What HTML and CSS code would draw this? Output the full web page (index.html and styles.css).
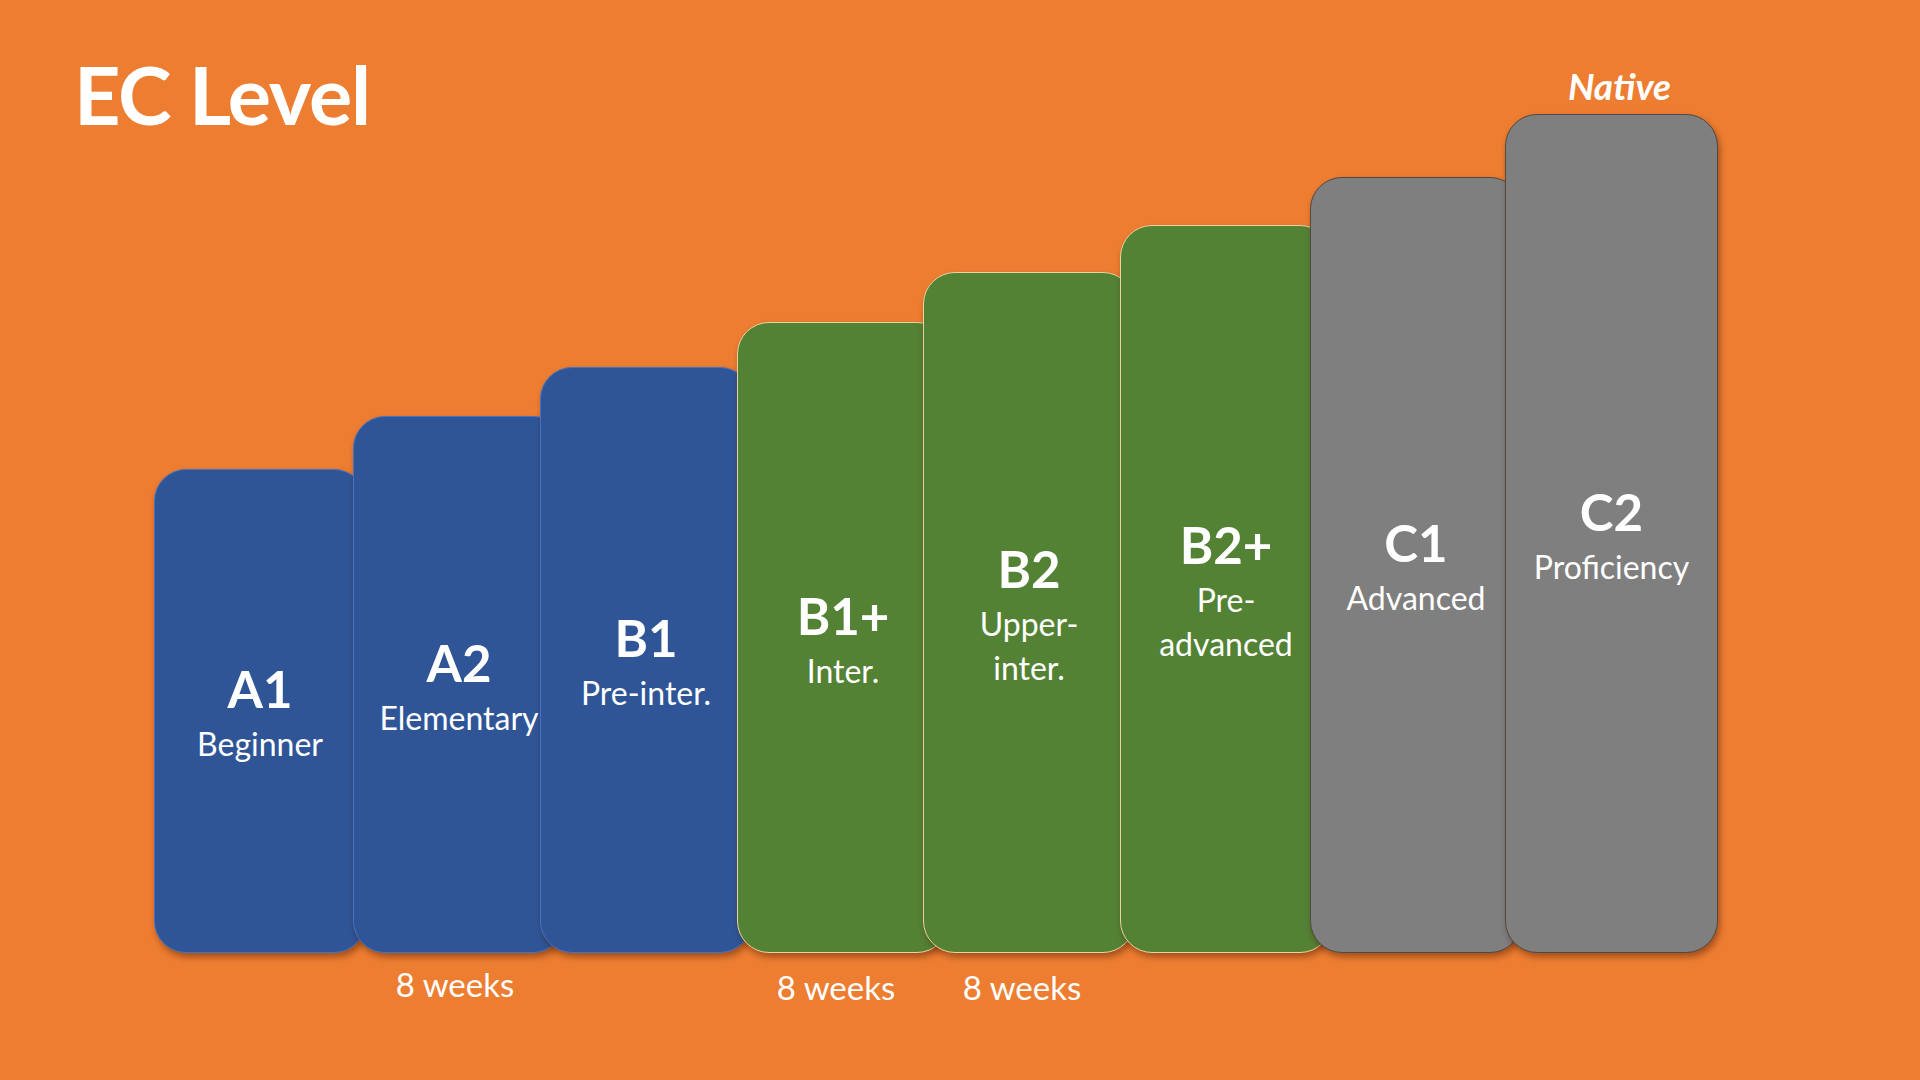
FILE: index.html
```html
<!DOCTYPE html>
<html lang="en">
<head>
<meta charset="utf-8">
<title>EC Level</title>
<link rel="stylesheet" href="styles.css">
</head>
<body>
<main class="slide">
  <h1 class="title">EC Level</h1>
  <section class="chart">
    <div class="col col-a1">
      <div class="bar blue"><span class="lv">A1</span><span class="sub">Beginner</span></div>
      <div class="weeks"></div>
    </div>
    <div class="col col-a2">
      <div class="bar blue"><span class="lv">A2</span><span class="sub">Elementary</span></div>
      <div class="weeks weeks-a2">8 weeks</div>
    </div>
    <div class="col col-b1">
      <div class="bar blue"><span class="lv">B1</span><span class="sub">Pre-inter.</span></div>
      <div class="weeks"></div>
    </div>
    <div class="col col-b1p">
      <div class="bar green"><span class="lv">B1+</span><span class="sub">Inter.</span></div>
      <div class="weeks weeks-low">8 weeks</div>
    </div>
    <div class="col col-b2">
      <div class="bar green"><span class="lv">B2</span><span class="sub">Upper-<br>inter.</span></div>
      <div class="weeks weeks-low">8 weeks</div>
    </div>
    <div class="col col-b2p">
      <div class="bar green"><span class="lv">B2+</span><span class="sub">Pre-<br>advanced</span></div>
      <div class="weeks"></div>
    </div>
    <div class="col col-c1">
      <div class="bar grey"><span class="lv">C1</span><span class="sub">Advanced</span></div>
      <div class="weeks"></div>
    </div>
    <div class="col col-c2">
      <div class="native">Native</div>
      <div class="bar grey"><span class="lv">C2</span><span class="sub">Proficiency</span></div>
      <div class="weeks"></div>
    </div>
  </section>
</main>
</body>
</html>
```
FILE: styles.css
```css
html, body {
  margin: 0;
  padding: 0;
}
body {
  width: 1920px;
  height: 1080px;
  overflow: hidden;
  background: #ed7d31;
  font-family: Lato, "Open Sans", "Liberation Sans", sans-serif;
  color: #ffffff;
}
.slide {
  width: 1920px;
  height: 1080px;
  display: flex;
  flex-direction: column;
}
.title {
  margin: 53px 0 0 74px;
  font-size: 81px;
  line-height: 81px;
  font-weight: 700;
  letter-spacing: -1.2px;
}
.chart {
  height: 879px;
  display: flex;
  align-items: flex-end;
  padding-left: 154px;
}
.col {
  width: 212px;
  display: flex;
  flex-direction: column;
  flex: none;
}
.col-a2 { margin-left: -13px; }
.col-b1 { margin-left: -25px; }
.col-b1p { margin-left: -15px; }
.col-b2 { margin-left: -26px; }
.col-b2p { margin-left: -15px; }
.col-c1 { margin-left: -22px; }
.col-c2 { margin-left: -17px; width: 213px; }

.col-a1 .bar { height: 484px; }
.col-a2 .bar { height: 537px; }
.col-b1 .bar { height: 586px; }
.col-b1p .bar { height: 631px; }
.col-b2 .bar { height: 681px; }
.col-b2p .bar { height: 728px; }
.col-c1 .bar { height: 776px; }
.col-c2 .bar { height: 839px; }

.bar {
  box-sizing: border-box;
  border-radius: 32px;
  border: 1.5px solid;
  display: flex;
  flex-direction: column;
  align-items: center;
  justify-content: center;
  text-align: center;
  box-shadow: 2px 4px 6px rgba(70, 25, 0, 0.45);
}
.blue {
  background: #2f5597;
  border-color: #4472c4;
}
.green {
  background: #548235;
  border-color: #e9d3a0;
}
.grey {
  background: #7f7f7f;
  border-color: #4f4a45;
}
.lv {
  font-size: 51px;
  line-height: 66px;
  font-weight: 700;
}
.sub {
  font-size: 32px;
  line-height: 44px;
  font-weight: 400;
}
.weeks {
  height: 60px;
  box-sizing: border-box;
  padding: 12px 14px 0 0;
  font-size: 33px;
  line-height: 38px;
  text-align: center;
}
.weeks-a2 {
  padding-right: 8px;
}
.weeks-low {
  padding-top: 15px;
}
.native {
  font-size: 37px;
  line-height: 40px;
  font-weight: 700;
  font-style: italic;
  text-align: center;
  padding-left: 16px;
  margin-bottom: 8px;
}
```
